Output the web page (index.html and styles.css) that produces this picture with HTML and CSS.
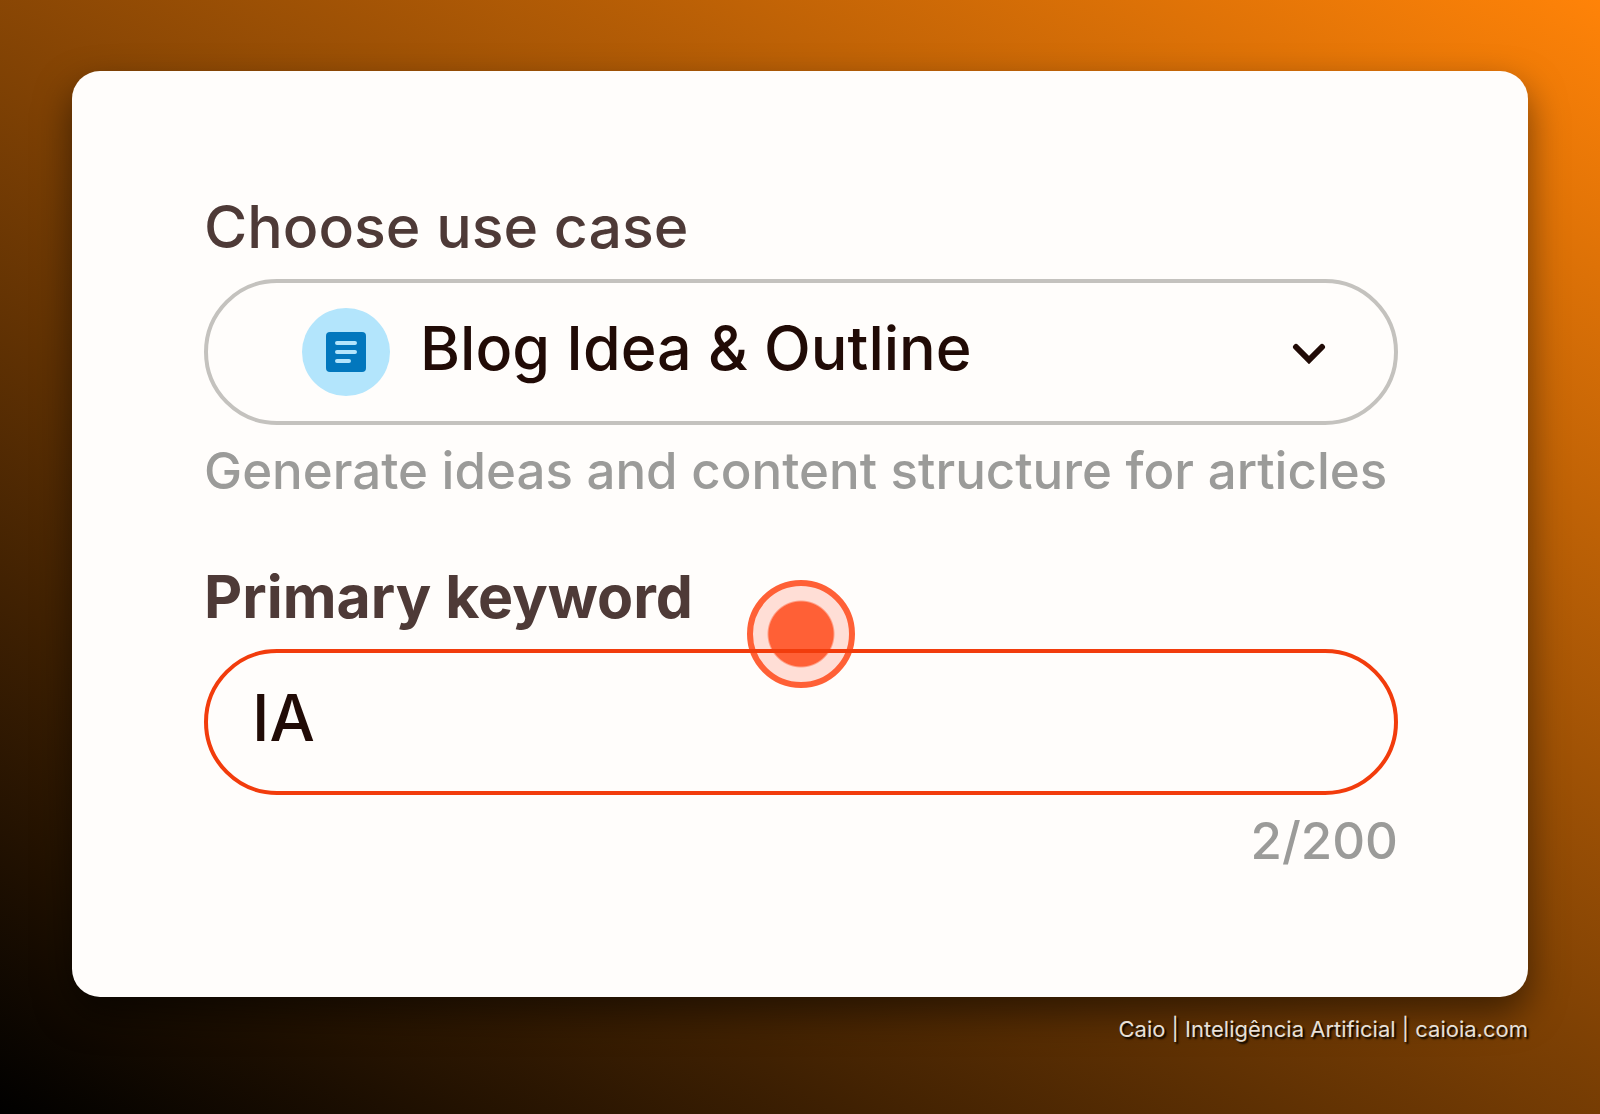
FILE: index.html
```html
<!DOCTYPE html>
<html lang="en">
<head>
    <meta charset="UTF-8">
    <meta name="viewport" content="width=device-width, initial-scale=1.0">
    <title>Blog Idea &amp; Outline</title>
    <link rel="stylesheet" href="styles.css">
</head>
<body>
    <main class="card">
        <form class="form">
            <div class="field">
                <label class="label" for="use-case">Choose use case</label>
                <div class="select-box">
                    <svg class="doc-icon" viewBox="0 0 88 88" aria-hidden="true">
                        <circle cx="44" cy="44" r="44" fill="#b3e5fc"/>
                        <rect x="24" y="24" width="40" height="40" rx="4" fill="#0277bd"/>
                        <path d="M35 35h18M35 44h18M35 53h12" stroke="#b3e5fc" stroke-width="4" stroke-linecap="round"/>
                    </svg>
                    <select id="use-case" name="use-case" class="control select">
                        <option>Blog Idea &amp; Outline</option>
                    </select>
                    <svg class="chevron" viewBox="0 0 36 24" aria-hidden="true">
                        <path d="M5 7l13 13L31 7" fill="none" stroke="#210b06" stroke-width="6" stroke-linecap="round"/>
                    </svg>
                </div>
                <p class="hint">Generate ideas and content structure for articles</p>
            </div>

            <div class="field">
                <label class="label label-strong" for="keyword">Primary keyword</label>
                <div class="input-box">
                    <input type="text" id="keyword" name="keyword" class="control input" value="IA" maxlength="200">
                    <span class="pointer"></span>
                </div>
                <p class="hint counter">2/200</p>
            </div>
        </form>
    </main>
    <footer class="credit">Caio | Inteligência Artificial | caioia.com</footer>
</body>
</html>
```
FILE: styles.css
```css
* {
    box-sizing: border-box;
}

body {
    margin: 0;
    padding: 71px 72px;
    min-height: 100vh;
    background: linear-gradient(31deg, #000000, #ff8308);
    font-family: Inter, sans-serif;
}

.card {
    background-color: #fffdfb;
    padding: 120px 130px 124px 132px;
    border-radius: 28px;
    box-shadow: 0 16px 36px rgba(0, 0, 0, 0.5);
}

.form {
    display: flex;
    flex-direction: column;
    gap: 58px;
}

.label {
    display: block;
    margin-bottom: 16px;
    line-height: 72px;
    font-size: 59px;
    font-weight: 500;
    color: #4e3a37;
}

.label-strong {
    font-weight: 700;
}

.select-box,
.input-box {
    display: grid;
    align-items: center;
    position: relative;
}

.control {
    width: 100%;
    height: 146px;
    border: 4px solid #c4c2be;
    border-radius: 73px;
    background: transparent;
    color: #210b06;
    font-family: inherit;
    font-size: 61px;
    font-weight: 500;
    outline: none;
}

.select {
    appearance: none;
    padding: 0 120px 8px 212px;
}

.doc-icon {
    position: absolute;
    left: 98px;
    width: 88px;
}

.chevron {
    position: absolute;
    right: 71px;
    width: 36px;
    pointer-events: none;
}

.input-box {
    isolation: isolate;
}

.input {
    padding: 0 44px 10px;
    border-color: #f23c0c;
    font-size: 64px;
}

/* click marker, sits behind the field border */
.pointer {
    position: absolute;
    z-index: -1;
    top: -69px;
    left: 50%;
    width: 108px;
    height: 108px;
    margin-left: -54px;
    border: 6px solid #ff6036;
    border-radius: 50%;
    background: radial-gradient(circle, #ff6036 32px, #ffded6 34px);
    pointer-events: none;
}

.hint {
    margin: 16px 0 2px;
    line-height: 60px;
    font-size: 51px;
    font-weight: 500;
    color: #9b9b99;
}

.counter {
    text-align: right;
}

.credit {
    margin-top: 17px;
    text-align: right;
    line-height: 30px;
    font-size: 22px;
    color: #e8e0d8;
    text-shadow: 2px 2px 2px #000000;
}
```
